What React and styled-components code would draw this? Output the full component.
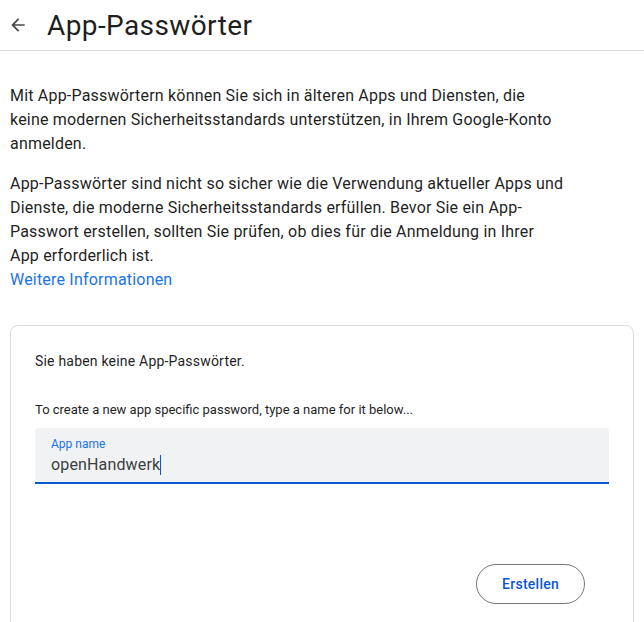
import React from 'react';
import styled, { createGlobalStyle } from 'styled-components';

const GlobalStyle = createGlobalStyle`
  html, body {
    margin: 0;
    padding: 0;
    background: #fff;
    font-family: Roboto, "Noto Sans", Arial, sans-serif;
    color: #1f1f1f;
  }
`;

const Page = styled.div`
  width: 644px;
  height: 622px;
  overflow: hidden;
`;

const Header = styled.header`
  display: flex;
  align-items: center;
  height: 51px;
  border-bottom: 1px solid #dadce0;
  box-sizing: border-box;
`;

const BackButton = styled.button`
  display: flex;
  align-items: center;
  justify-content: center;
  width: 36px;
  height: 36px;
  padding: 0;
  border: 0;
  background: none;
  color: #444746;
`;

const Title = styled.h1`
  margin: 0 0 0 11px;
  font-size: 28px;
  font-weight: 400;
  color: #1f1f1f;
  letter-spacing: 0.4px;
`;

const Content = styled.main`
  padding: 33px 10px 0 10px;
`;

const Paragraph = styled.p`
  margin: 0 0 16px;
  max-width: 554px;
  font-size: 16px;
  line-height: 24px;
  letter-spacing: 0.2px;
  color: #1f1f1f;
`;

const Link = styled.a`
  display: block;
  margin-top: -16px;
  font-size: 16px;
  line-height: 24px;
  letter-spacing: 0.2px;
  color: #1a73e8;
  text-decoration: none;
`;

const Card = styled.section`
  margin-top: 33px;
  height: 320px;
  border: 1px solid #dadce0;
  border-radius: 8px;
  padding: 25px 24px 0 24px;
  box-sizing: border-box;
`;

const Note = styled.p`
  margin: 0;
  font-size: 14px;
  line-height: 20px;
  letter-spacing: 0.2px;
  color: #1f1f1f;
`;

const Hint = styled.p`
  margin: 31px 0 10px;
  font-size: 13px;
  line-height: 16px;
  color: #1f1f1f;
`;

const Field = styled.div`
  background: #f0f2f4;
  border-radius: 4px 4px 0 0;
  border-bottom: 2px solid #0b57d0;
  padding: 8px 16px 7px;
  box-sizing: border-box;
  height: 56px;
`;

const FieldLabel = styled.div`
  margin-top: 1px;
  font-size: 12px;
  line-height: 14px;
  color: #1a73e8;
`;

const FieldValue = styled.div`
  display: flex;
  align-items: center;
  margin-top: 2px;
  font-size: 16px;
  line-height: 24px;
  letter-spacing: 0.15px;
  color: #3c4043;
`;

const Caret = styled.span`
  display: inline-block;
  width: 1px;
  height: 20px;
  background: #0b57d0;
`;

const Actions = styled.div`
  display: flex;
  justify-content: flex-end;
  margin-top: 80px;
  padding-right: 24px;
`;

const OutlineButton = styled.button`
  height: 40px;
  padding: 0 25px;
  border: 1px solid #747775;
  border-radius: 20px;
  background: #fff;
  color: #0b57d0;
  font-family: inherit;
  font-size: 14px;
  font-weight: 500;
  letter-spacing: 0.25px;
`;

function ArrowBack() {
  return (
    <svg width="20" height="20" viewBox="0 0 24 24" fill="currentColor">
      <path d="M20 11H7.83l5.59-5.59L12 4l-8 8 8 8 1.41-1.41L7.83 13H20v-2z" />
    </svg>
  );
}

export default function App() {
  return (
    <Page>
      <GlobalStyle />
      <Header>
        <BackButton aria-label="Zurück">
          <ArrowBack />
        </BackButton>
        <Title>App-Passwörter</Title>
      </Header>
      <Content>
        <Paragraph>
          Mit App-Passwörtern können Sie sich in älteren Apps und Diensten, die
          keine modernen Sicherheitsstandards unterstützen, in Ihrem Google-Konto
          anmelden.
        </Paragraph>
        <Paragraph>
          App-Passwörter sind nicht so sicher wie die Verwendung aktueller Apps und
          Dienste, die moderne Sicherheitsstandards erfüllen. Bevor Sie ein
          App-Passwort erstellen, sollten Sie prüfen, ob dies für die Anmeldung in
          Ihrer App erforderlich ist.
        </Paragraph>
        <Link href="#">Weitere Informationen</Link>
        <Card>
          <Note>Sie haben keine App-Passwörter.</Note>
          <Hint>To create a new app specific password, type a name for it below...</Hint>
          <Field>
            <FieldLabel>App name</FieldLabel>
            <FieldValue>
              openHandwerk<Caret />
            </FieldValue>
          </Field>
          <Actions>
            <OutlineButton>Erstellen</OutlineButton>
          </Actions>
        </Card>
      </Content>
    </Page>
  );
}
